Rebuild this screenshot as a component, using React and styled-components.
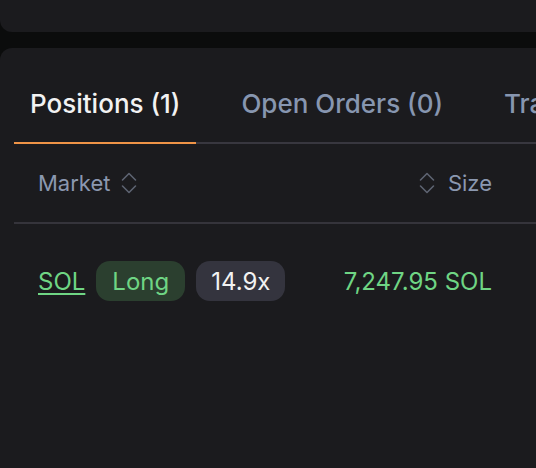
import React from 'react'
import styled, { createGlobalStyle } from 'styled-components'

const GlobalStyle = createGlobalStyle`
  html, body {
    margin: 0;
    padding: 0;
    background: #0b0c0c;
  }
  body {
    font-family: 'Inter', 'Noto Sans', sans-serif;
    -webkit-font-smoothing: antialiased;
  }
`

const tabs = [
  { label: 'Positions (1)', active: true },
  { label: 'Open Orders (0)' },
  { label: 'Trade History' },
]

const SortIcon = () => (
  <svg width="16" height="22" viewBox="0 0 16 22" fill="none">
    <path d="M1.5 8 L8 1.5 L14.5 8" stroke="#5d6371" strokeWidth="1.6" strokeLinecap="round" strokeLinejoin="round" />
    <path d="M1.5 14 L8 20.5 L14.5 14" stroke="#5d6371" strokeWidth="1.6" strokeLinecap="round" strokeLinejoin="round" />
  </svg>
)

const App = () => {
  return (
    <>
      <GlobalStyle />
      <Page>
        <TopCard />
        <Panel>
          <TabBar>
            {tabs.map((t) => (
              <Tab key={t.label} $active={t.active}>{t.label}</Tab>
            ))}
          </TabBar>
          <HeaderRow>
            <MarketCell>
              <HeadText>Market</HeadText>
              <SortIcon />
            </MarketCell>
            <SizeCell>
              <SortIcon />
              <HeadText>Size</HeadText>
            </SizeCell>
          </HeaderRow>
          <Row>
            <MarketCell>
              <SymbolLink href="#">SOL</SymbolLink>
              <Badge $variant="long">Long</Badge>
              <Badge>14.9x</Badge>
            </MarketCell>
            <SizeCell>
              <SizeValue>7,247.95 SOL</SizeValue>
            </SizeCell>
          </Row>
        </Panel>
      </Page>
    </>
  )
}

export default App

const Page = styled.div`
  width: 536px;
  height: 468px;
  overflow: hidden;
  display: flex;
  flex-direction: column;
  gap: 16px;
`

const TopCard = styled.div`
  width: 760px;
  height: 32px;
  flex-shrink: 0;
  background: #1b1b1e;
  border-radius: 0 0 12px 12px;
`

const Panel = styled.div`
  width: 760px;
  flex: 1;
  background: #1b1b1e;
  border-radius: 12px 12px 0 0;
  padding: 16px 0 0 14px;
  box-sizing: border-box;
`

const TabBar = styled.div`
  display: flex;
  gap: 29px;
  border-bottom: 2px solid #38373f;
`

const Tab = styled.div`
  padding: 24px 16px 22px;
  margin-bottom: -2px;
  font-size: 26px;
  line-height: 32px;
  font-weight: 500;
  white-space: nowrap;
  color: ${(p) => (p.$active ? '#f2f2f2' : '#8796b0')};
  border-bottom: 2px solid ${(p) => (p.$active ? '#ef9447' : 'transparent')};
`

const HeaderRow = styled.div`
  display: flex;
  align-items: center;
  height: 78px;
  border-bottom: 2px solid #35343b;
`

const Row = styled.div`
  display: flex;
  align-items: center;
  height: 114px;
`

const MarketCell = styled.div`
  width: 300px;
  padding-left: 24px;
  box-sizing: border-box;
  display: flex;
  align-items: center;
  gap: 11px;
`

const SizeCell = styled.div`
  width: 178px;
  display: flex;
  align-items: center;
  justify-content: flex-end;
  gap: 13px;
`

const HeadText = styled.span`
  font-size: 22px;
  color: #8b98b0;
`

const SymbolLink = styled.a`
  font-size: 24px;
  color: #6fd584;
  text-decoration: underline;
  text-decoration-thickness: 2px;
  text-underline-offset: 3px;
`

const Badge = styled.span`
  height: 40px;
  display: inline-flex;
  align-items: center;
  padding: 0 ${(p) => (p.$variant === 'long' ? '16px' : '15px')};
  border-radius: 14px;
  font-size: 24px;
  background: ${(p) => (p.$variant === 'long' ? '#2b3f2f' : '#34343e')};
  color: ${(p) => (p.$variant === 'long' ? '#6fd584' : '#f2f2f2')};
`

const SizeValue = styled.span`
  font-size: 24px;
  color: #6fd584;
`
